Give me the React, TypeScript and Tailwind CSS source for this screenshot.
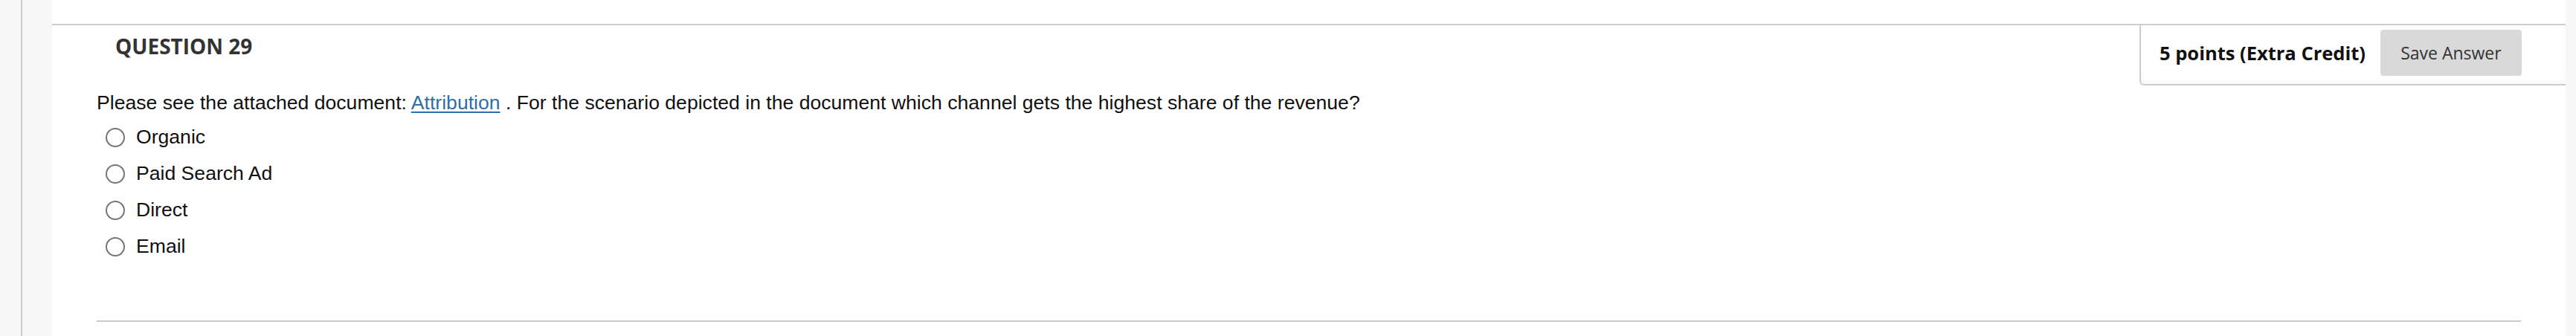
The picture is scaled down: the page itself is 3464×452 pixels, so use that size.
import React from 'react';

const answers = ['Organic', 'Paid Search Ad', 'Direct', 'Email'];

function Radio() {
  return <span className="block w-[26px] h-[26px] rounded-full border-2 border-[#767676] bg-white shrink-0" />;
}

export default function App() {
  return (
    <div className="flex w-full h-[452px] bg-[#f7f7f7] overflow-hidden">
      {/* left rail */}
      <div className="flex w-[70px] shrink-0">
        <div className="w-[28px]" />
        <div className="w-[2px] bg-[#cccccc]" />
      </div>

      {/* question panel */}
      <div className="flex-1 flex flex-col bg-white">
        <div className="h-[32px]" />
        <div className="flex-1 flex flex-col border-t-2 border-[#cccccc]">
          {/* header */}
          <div className="flex items-start">
            <h2 className="ml-[85px] mt-[9px] leading-[38px] text-[28px] font-bold text-[#333333] font-['Open_Sans',sans-serif]">
              QUESTION 29
            </h2>
            <div className="ml-auto w-[573px] h-[81px] flex items-center pl-[25px] pt-[6px] pb-[11px] gap-[20px] border-l-2 border-b-2 border-[#cccccc] rounded-bl-[6px] shadow-[inset_0_-4px_6px_rgba(0,0,0,0.035)] font-['Open_Sans',sans-serif]">
              <span className="text-[25.5px] font-bold text-[#111111] whitespace-nowrap">5 points (Extra Credit)</span>
              <button className="w-[190px] h-[62px] shrink-0 rounded-[4px] bg-[#d9d9d9] text-[23px] text-[#333333]">
                Save Answer
              </button>
            </div>
          </div>

          {/* body */}
          <div className="px-[60px] flex flex-col font-['Liberation_Sans',Arial,sans-serif] text-[26.6px] text-[#111111]">
            <p className="mt-[8px] leading-[31px] whitespace-nowrap">
              Please see the attached document:{' '}
              <a href="#" className="text-[#2f6fa7] underline underline-offset-[3px]">Attribution</a>
              {' '}. For the scenario depicted in the document which channel gets the highest share of the revenue?
            </p>
            <ul className="mt-[6px] flex flex-col">
              {answers.map((a) => (
                <li key={a} className="h-[49px] flex items-center pl-[12px] gap-[15px]">
                  <Radio />
                  <span className="leading-[31px]">{a}</span>
                </li>
              ))}
            </ul>
            <div className="mt-[75px] h-[2px] bg-[#cccccc]" />
          </div>
        </div>
      </div>

      {/* right rail */}
      <div className="w-[14px] shrink-0" />
    </div>
  );
}
